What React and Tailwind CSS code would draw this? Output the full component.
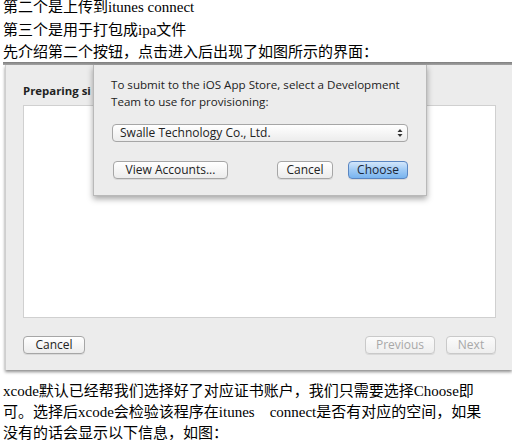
import React from "react";

const ui = { fontFamily: '"Open Sans", "DejaVu Sans", sans-serif' };
const doc = { fontFamily: '"Liberation Serif", "Noto Sans CJK SC", serif' };

function MacButton({ children, className = "", disabled = false, primary = false }) {
  const base =
    "flex items-center justify-center h-[18px] rounded-[4px] border text-[12px] leading-none shadow-[0_1px_0_rgba(0,0,0,0.08)]";
  const look = primary
    ? "border-[#5a86c2] bg-gradient-to-b from-[#d3e6fb] via-[#9fcaf5] to-[#78b4ef] text-[#1b2636]"
    : disabled
    ? "border-[#c9c9c9] bg-gradient-to-b from-[#fbfbfb] to-[#eeeeee] text-[#a8a8a8]"
    : "border-[#a6a6a6] bg-gradient-to-b from-[#ffffff] to-[#ececec] text-[#222]";
  return <div className={`${base} ${look} ${className}`}>{children}</div>;
}

export default function App() {
  return (
    <div className="w-[512px] h-[440px] overflow-hidden bg-white text-black flex flex-col">
      {/* top text */}
      <div className="h-[62px] shrink-0 flex flex-col pl-[3px] text-[15px] leading-[22.5px]" style={doc}>
        <div className="-mt-[4px] whitespace-nowrap">
          <div>第二个是上传到itunes connect</div>
          <div>第三个是用于打包成ipa文件</div>
          <div>先介绍第二个按钮，点击进入后出现了如图所示的界面：</div>
        </div>
      </div>

      {/* screenshot */}
      <div className="relative h-[319px] shrink-0">
        <div className="ml-[3px] h-[3px] bg-gradient-to-b from-[#7d7d7d] to-[#a9a9a9]" />
        <div className="ml-[5px] h-[305px] bg-[#ececec] border-l border-[#cfcfcf] shadow-[0_2px_3px_rgba(0,0,0,0.45)] flex flex-col pl-[17px] pr-[16px]" style={ui}>
          <div className="h-[40px] pt-[19px]">
            <div className="text-[11.4px] font-bold text-[#222] whitespace-nowrap leading-[14px]">
              Preparing si
            </div>
          </div>
          <div className="h-[213px] bg-white border border-[#d0d0d0]" />
          <div className="mt-[18px] flex items-center">
            <MacButton className="w-[62px]">Cancel</MacButton>
            <div className="flex-1" />
            <MacButton disabled className="w-[70px]">Previous</MacButton>
            <MacButton disabled className="w-[50px] ml-[11px]">Next</MacButton>
          </div>
        </div>

        {/* sheet */}
        <div
          className="absolute left-[93px] top-[3px] w-[334px] h-[131px] bg-[#ececec] border-x border-b border-[#b9b9b9] shadow-[0_3px_6px_rgba(0,0,0,0.35)] pl-[17px] pr-[18px] pt-[11px]"
          style={ui}
        >
          <div className="text-[11.6px] leading-[17px] text-[#222]">
            <div className="whitespace-nowrap">To submit to the iOS App Store, select a Development</div>
            <div className="whitespace-nowrap">Team to use for provisioning:</div>
          </div>
          <div className="mt-[14px] ml-[1px] h-[18px] rounded-[4px] border border-[#a6a6a6] bg-gradient-to-b from-[#ffffff] to-[#ececec] flex items-center pl-[7px] pr-[4px] text-[12px] text-[#222]">
            <span className="flex-1 whitespace-nowrap">Swalle Technology Co., Ltd.</span>
            <svg width="6" height="10" viewBox="0 0 6 10">
              <path d="M0.5 4 L3 1 L5.5 4 Z" fill="#333" />
              <path d="M0.5 6 L3 9 L5.5 6 Z" fill="#333" />
            </svg>
          </div>
          <div className="mt-[19px] ml-[2px] flex items-center">
            <MacButton className="w-[115px] text-[12.5px]">View Accounts...</MacButton>
            <div className="flex-1" />
            <MacButton className="w-[56px] text-[12.5px]">Cancel</MacButton>
            <MacButton primary className="w-[60px] ml-[15px] text-[12.5px]">Choose</MacButton>
          </div>
        </div>
      </div>

      {/* bottom text */}
      <div className="pl-[3px] text-[15px] leading-[21px] whitespace-nowrap" style={doc}>
        <div>xcode默认已经帮我们选择好了对应证书账户，我们只需要选择Choose即</div>
        <div>可。选择后xcode会检验该程序在itunes　connect是否有对应的空间，如果</div>
        <div>没有的话会显示以下信息，如图：</div>
      </div>
    </div>
  );
}
